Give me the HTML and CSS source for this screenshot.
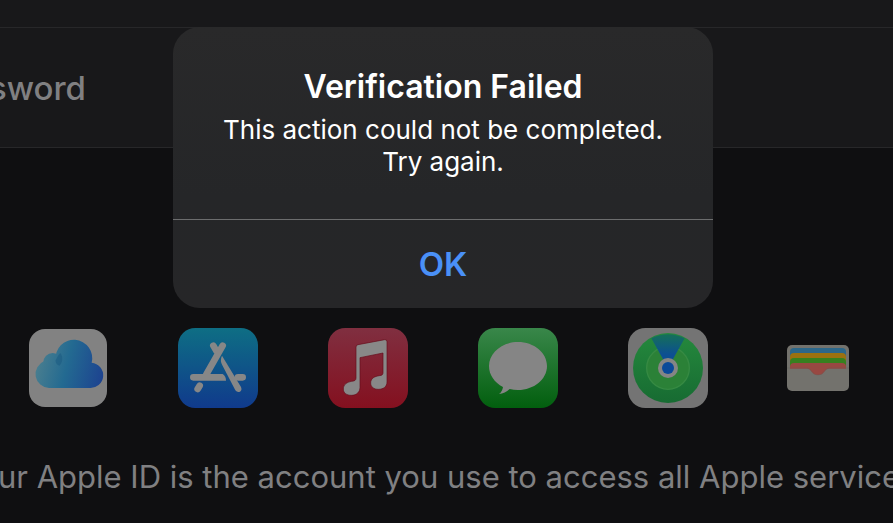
FILE: index.html
```html
<!DOCTYPE html>
<html lang="en">
<head>
    <meta charset="UTF-8">
    <meta name="viewport" content="width=device-width, initial-scale=1.0">
    <title>Verification Failed</title>
    <link rel="stylesheet" href="styles.css">
</head>
<body>
    <div class="page">
        <div class="topbar"></div>
        <div class="row">
            <label class="row-label" for="password">Password</label>
            <input id="password" class="row-input" type="password">
        </div>
        <div class="apps">
            <!-- iCloud -->
            <svg class="app" viewBox="0 0 240 240">
                <defs>
                    <linearGradient id="cloud" gradientUnits="userSpaceOnUse" x1="21" y1="110" x2="222" y2="160">
                        <stop offset="0" stop-color="#4b7f8f"/>
                        <stop offset=".45" stop-color="#236a91"/>
                        <stop offset="1" stop-color="#1d4390"/>
                    </linearGradient>
                </defs>
                <rect x="3" y="3" width="234" height="234" rx="48" fill="#828282"/>
                <g fill="url(#cloud)">
                    <circle cx="74" cy="103" r="28"/>
                    <path d="M63 180a42 42 0 0 1-14-81 46 46 0 0 1 34-3 55 55 0 1 1 108 8 38 38 0 0 1-7 76z"/>
                </g>
                <path d="M83 97a55 55 0 0 1 14-22c9 12 7 29-3 38-8-2-12-9-11-16z" fill="#17587f" opacity=".5"/>
            </svg>
            <!-- App Store -->
            <svg class="app" viewBox="0 0 240 240">
                <defs>
                    <linearGradient id="store" x2="0" y2="1">
                        <stop offset="0" stop-color="#0e6e84"/>
                        <stop offset="1" stop-color="#103a8c"/>
                    </linearGradient>
                </defs>
                <rect width="240" height="240" rx="52" fill="url(#store)"/>
                <g fill="none" stroke="#878787" stroke-width="20" stroke-linecap="round">
                    <path d="M134 53L85 139M106 53l10 17"/>
                    <path d="M180 148h14M65 173l-6 10"/>
                </g>
                <path d="M46 138h88q10 6 10 20H46a10 10 0 0 1 0-20zM132 83q-7 14 1 29l39 75q6 8 14 4 7-5 3-14z" fill="#878787"/>
            </svg>
            <!-- Music -->
            <svg class="app" viewBox="0 0 240 240">
                <defs>
                    <linearGradient id="music" x2="0" y2="1">
                        <stop offset="0" stop-color="#802f40"/>
                        <stop offset="1" stop-color="#84101f"/>
                    </linearGradient>
                </defs>
                <rect width="240" height="240" rx="52" fill="url(#music)"/>
                <path d="M90 50l80-15q7-1 7 6v121c0 14-11 22-26 22-13 0-23-7-23-19 0-15 13-20 26-22 8-1 11-3 11-9V75L96 89v89c0 14-10 24-26 24-14 0-24-7-24-19 0-14 12-21 25-23 9-1 13-3 13-10V57q0-6 6-7z" fill="#888" stroke="#650c1b" stroke-width="2"/>
            </svg>
            <!-- Messages -->
            <svg class="app" viewBox="0 0 240 240">
                <defs>
                    <linearGradient id="messages" x2="0" y2="1">
                        <stop offset="0" stop-color="#39874a"/>
                        <stop offset="1" stop-color="#025f0e"/>
                    </linearGradient>
                </defs>
                <rect width="240" height="240" rx="52" fill="url(#messages)"/>
                <path d="M120 42c48 0 87 32 87 72s-39 72-87 72q-13 0-25-3-14 13-32 15 10-7 12-21c-26-14-42-36-42-63 0-40 39-72 87-72z" fill="#858585"/>
            </svg>
            <!-- Find My -->
            <svg class="app" viewBox="0 0 240 240">
                <defs>
                    <linearGradient id="find" x2="0" y2="1">
                        <stop offset="0" stop-color="#25893d"/>
                        <stop offset="1" stop-color="#176b32"/>
                    </linearGradient>
                    <linearGradient id="beam" x2="0" y2="1">
                        <stop offset="0" stop-color="#157058"/>
                        <stop offset=".6" stop-color="#0c4f92"/>
                    </linearGradient>
                </defs>
                <rect width="240" height="240" rx="52" fill="#747474"/>
                <circle cx="120" cy="120" r="105" fill="url(#find)"/>
                <circle cx="120" cy="120" r="64" fill="#2b8137" stroke="#368a43" stroke-width="4"/>
                <path d="M120 120L70 31q50-24 100 0z" fill="url(#beam)"/>
                <circle cx="120" cy="120" r="30" fill="#858585"/>
                <circle cx="120" cy="120" r="18" fill="#0b4a99"/>
            </svg>
            <!-- Wallet -->
            <svg class="app" viewBox="0 0 240 240">
                <rect x="27" y="51" width="186" height="138" rx="15" fill="#73726d"/>
                <path d="M36 120V72q0-12 12-12h144q12 0 12 12v48z" fill="#2c678a"/>
                <path d="M36 120V87q0-12 12-12h144q12 0 12 12v33z" fill="#9b7110"/>
                <path d="M36 120v-18q0-12 12-12h144q12 0 12 12v18z" fill="#37801f"/>
                <path d="M36 122v-5q0-12 12-12h144q12 0 12 12v5z" fill="#984842"/>
                <path d="M78 119c26 0 19 22 42 22s16-22 42-22z" fill="#984842"/>
                <path d="M27 120h54c24 0 19 21 39 21s15-21 39-21h54" fill="none" stroke="#5d5b56" stroke-width="1"/>
            </svg>
        </div>
        <p class="caption">Your Apple ID is the account you use to access all Apple services.</p>
    </div>
    <div class="overlay">
        <div class="alert" role="alertdialog" aria-labelledby="alert-title" aria-describedby="alert-message">
            <div class="alert-body">
                <h1 id="alert-title" class="alert-title">Verification Failed</h1>
                <p id="alert-message" class="alert-message">This action could not be completed. Try again.</p>
            </div>
            <button class="alert-button" type="button">OK</button>
        </div>
    </div>
</body>
</html>
```
FILE: styles.css
```css
* {
    box-sizing: border-box;
}
body {
    margin: 0;
    min-height: 100vh;
    overflow: hidden;
    position: relative;
    background: #0f0f11;
    color: #808082;
    font-family: Inter, "Liberation Sans", sans-serif;
}
.page {
    overflow: hidden;
}
.topbar {
    height: 27px;
    background: #18181a;
}
.row {
    display: flex;
    align-items: center;
    height: 121px;
    background: #18181a;
    border-top: 1px solid #272729;
    border-bottom: 1px solid #272729;
}
.row-label {
    display: flex;
    justify-content: flex-end;
    width: 86px;
    font-size: 33px;
    font-weight: 500;
    line-height: 40px;
}
.row-input {
    flex: 1;
    min-width: 0;
    height: 60px;
    border: 0;
    background: none;
    color: inherit;
    font: inherit;
}
.apps {
    display: flex;
    justify-content: center;
    gap: 70px;
    padding: 180px 7px 0 0;
}
.app {
    flex: none;
    width: 80px;
    height: 80px;
}
.caption {
    display: flex;
    justify-content: center;
    margin: 0;
    padding: 49px 7px 0 0;
    font-size: 31px;
    line-height: 40px;
    white-space: nowrap;
}
.overlay {
    position: absolute;
    inset: 0;
    display: flex;
    align-items: flex-start;
    justify-content: center;
    padding: 27px 7px 0 0;
}
.alert {
    width: 540px;
    overflow: hidden;
    border-radius: 27px;
    background: linear-gradient(#29292a, #252628 60%, #262628);
    color: #fff;
    text-align: center;
}
.alert-body {
    padding: 40px 48px 41px;
}
.alert-title {
    margin: 0;
    font-size: 32px;
    font-weight: 600;
    line-height: 40px;
}
.alert-message {
    margin: 0;
    padding-top: 7px;
    font-size: 26px;
    line-height: 32px;
}
.alert-button {
    display: block;
    width: 100%;
    height: 89px;
    padding: 0;
    border: 0;
    border-top: 1px solid #6c6d6e;
    background: none;
    color: #4a90f7;
    font-family: inherit;
    font-size: 33px;
    font-weight: 600;
}
```
